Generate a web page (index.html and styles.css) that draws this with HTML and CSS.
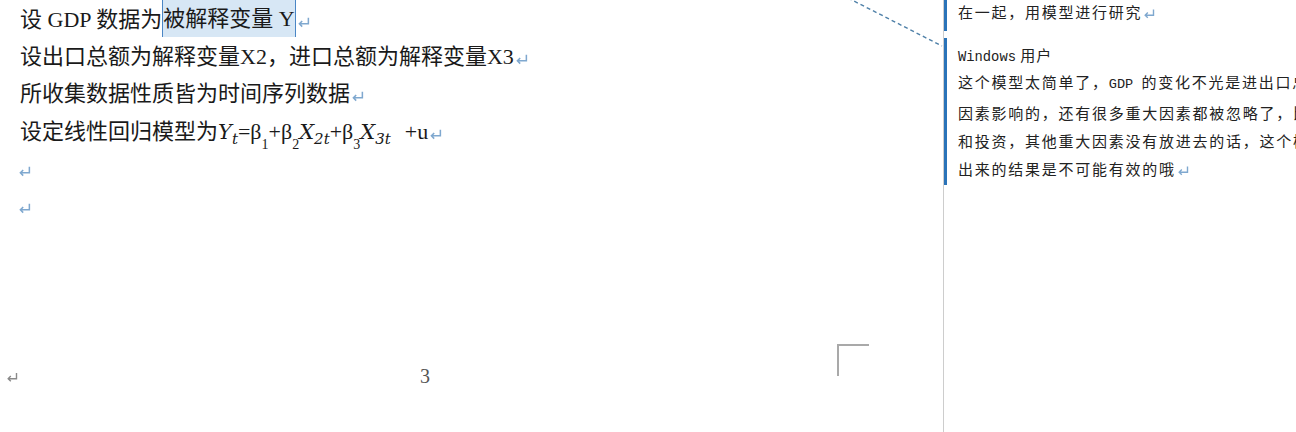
FILE: index.html
```html
<!DOCTYPE html>
<html lang="zh-CN">
<head>
<meta charset="utf-8">
<title>Document</title>
<link rel="stylesheet" href="styles.css">
</head>
<body>
<div class="screen">
  <main class="doc">
    <div class="body-text">
      <p class="line">设 GDP 数据为<span class="sel">被解释变量 Y</span><svg class="ret" viewBox="0 0 12 11"><path d="M10.5 1.5V7.2H2.2M4.8 4.6L2.2 7.2L4.8 9.8"/></svg></p>
      <p class="line">设出口总额为解释变量X2，进口总额为解释变量X3<svg class="ret" viewBox="0 0 12 11"><path d="M10.5 1.5V7.2H2.2M4.8 4.6L2.2 7.2L4.8 9.8"/></svg></p>
      <p class="line">所收集数据性质皆为时间序列数据<svg class="ret" viewBox="0 0 12 11"><path d="M10.5 1.5V7.2H2.2M4.8 4.6L2.2 7.2L4.8 9.8"/></svg></p>
      <p class="line">设定线性回归模型为<span class="m">Y<sub class="ms">t</sub></span>=β<sub class="low">1</sub>+β<sub class="low">2</sub><span class="m">X<sub class="ms">2t</sub></span>+β<sub class="low">3</sub><span class="m">X<sub class="ms">3t</sub></span><span class="gap"></span>+u<svg class="ret" viewBox="0 0 12 11"><path d="M10.5 1.5V7.2H2.2M4.8 4.6L2.2 7.2L4.8 9.8"/></svg></p>
      <p class="line"><svg class="ret first" viewBox="0 0 12 11"><path d="M10.5 1.5V7.2H2.2M4.8 4.6L2.2 7.2L4.8 9.8"/></svg></p>
      <p class="line"><svg class="ret first" viewBox="0 0 12 11"><path d="M10.5 1.5V7.2H2.2M4.8 4.6L2.2 7.2L4.8 9.8"/></svg></p>
    </div>
    <footer class="page-foot">
      <svg class="ret gray" viewBox="0 0 12 11"><path d="M10.5 1.5V7.2H2.2M4.8 4.6L2.2 7.2L4.8 9.8"/></svg>
      <span class="pageno">3</span>
      <span class="corner"></span>
    </footer>
  </main>
  <aside class="comments">
    <div class="comment c1">
      <p class="ctext">在一起，用模型进行研究<svg class="ret small" viewBox="0 0 12 11"><path d="M10.5 1.5V7.2H2.2M4.8 4.6L2.2 7.2L4.8 9.8"/></svg></p>
    </div>
    <div class="comment c2">
      <p class="author"><span class="lat">Windows</span> 用户</p>
      <p class="ctext">这个模型太简单了，<span class="lat">GDP </span>的变化不光是进出口总</p>
      <p class="ctext">因素影响的，还有很多重大因素都被忽略了，比</p>
      <p class="ctext">和投资，其他重大因素没有放进去的话，这个模</p>
      <p class="ctext">出来的结果是不可能有效的哦<svg class="ret small" viewBox="0 0 12 11"><path d="M10.5 1.5V7.2H2.2M4.8 4.6L2.2 7.2L4.8 9.8"/></svg></p>
    </div>
  </aside>
  <svg class="link" viewBox="0 0 110 60" width="110" height="60"><line x1="8" y1="-2" x2="102" y2="46"/></svg>
</div>
</body>
</html>
```

FILE: styles.css
```css
* { box-sizing: border-box; }
html, body { margin: 0; padding: 0; background: #fff; }
body { width: 1296px; height: 432px; overflow: hidden; }

.screen {
  position: relative;
  display: flex;
  width: 1296px;
  height: 432px;
  overflow: hidden;
}

.doc {
  width: 943px;
  flex: none;
  height: 432px;
  display: flex;
  flex-direction: column;
}

.body-text {
  padding-left: 20px;
  padding-top: 1px;
  font-family: "Liberation Serif", "Noto Sans CJK SC", serif;
  font-size: 22px;
  color: #1a1a1a;
}

.line {
  margin: 0;
  height: 37.2px;
  line-height: 37px;
  white-space: nowrap;
}

.sel {
  display: inline-block;
  background: #d7e7f5;
  border-left: 1.5px solid #4a86c5;
  border-right: 1.5px solid #4a86c5;
  line-height: 37px;
  height: 37px;
  vertical-align: top;
  margin-top: -1px;
}

.ret {
  width: 13px;
  height: 12px;
  vertical-align: -1px;
  margin-left: 1px;
}
.ret path {
  fill: none;
  stroke: #7fa8cf;
  stroke-width: 1.4;
}
.ret.first { margin-left: -2px; }
.ret.gray path { stroke: #8a8a8a; }
.ret.small { width: 12px; height: 11px; }

.m {
  font-family: "DejaVu Serif", "Liberation Serif", serif;
  font-style: italic;
  font-size: 21px;
}
.ms { font-size: 15px; vertical-align: -5px; }
.low { font-size: 14px; vertical-align: -10px; }
.gap { display: inline-block; width: 14px; }

.page-foot {
  margin-top: auto;
  height: 88px;
  display: flex;
  align-items: flex-start;
  padding-left: 6px;
}
.page-foot .ret {
  margin-top: 27px;
  margin-left: 0;
  width: 12px;
  height: 12px;
}
.pageno {
  margin-top: 21px;
  margin-left: 402px;
  font-family: "Liberation Serif", serif;
  font-size: 20px;
  line-height: 22px;
  color: #555;
}
.corner {
  margin-left: 407px;
  width: 32px;
  height: 32px;
  border-top: 2px solid #a9a9a9;
  border-left: 2px solid #a9a9a9;
}

.comments {
  flex: 1;
  border-left: 1px solid #cdcdcd;
  height: 432px;
  font-family: "Noto Sans CJK SC", sans-serif;
  font-size: 15px;
  color: #222;
  overflow: hidden;
}

.comment {
  margin-left: -1px;
  border-left: 4px solid #2a73b8;
  padding-left: 11px;
  white-space: nowrap;
}
.c1 {
  height: 31px;
  padding-top: 0;
}
.c2 {
  margin-top: 7px;
  height: 147px;
  padding-top: 7px;
}
.c1 .ctext { line-height: 24px; }

.ctext {
  margin: 0;
  letter-spacing: 1.75px;
  line-height: 28px;
}
.author {
  margin: 0;
  line-height: 20px;
  letter-spacing: 1px;
}
.lat {
  font-family: "Liberation Mono", monospace;
  font-size: 13.6px;
  letter-spacing: 0;
}
.author .lat { font-size: 13.8px; }

.link {
  position: absolute;
  left: 840px;
  top: 0;
  overflow: visible;
}
.link line {
  stroke: #4f80a8;
  stroke-width: 1.4;
  stroke-dasharray: 4 3;
}
```
